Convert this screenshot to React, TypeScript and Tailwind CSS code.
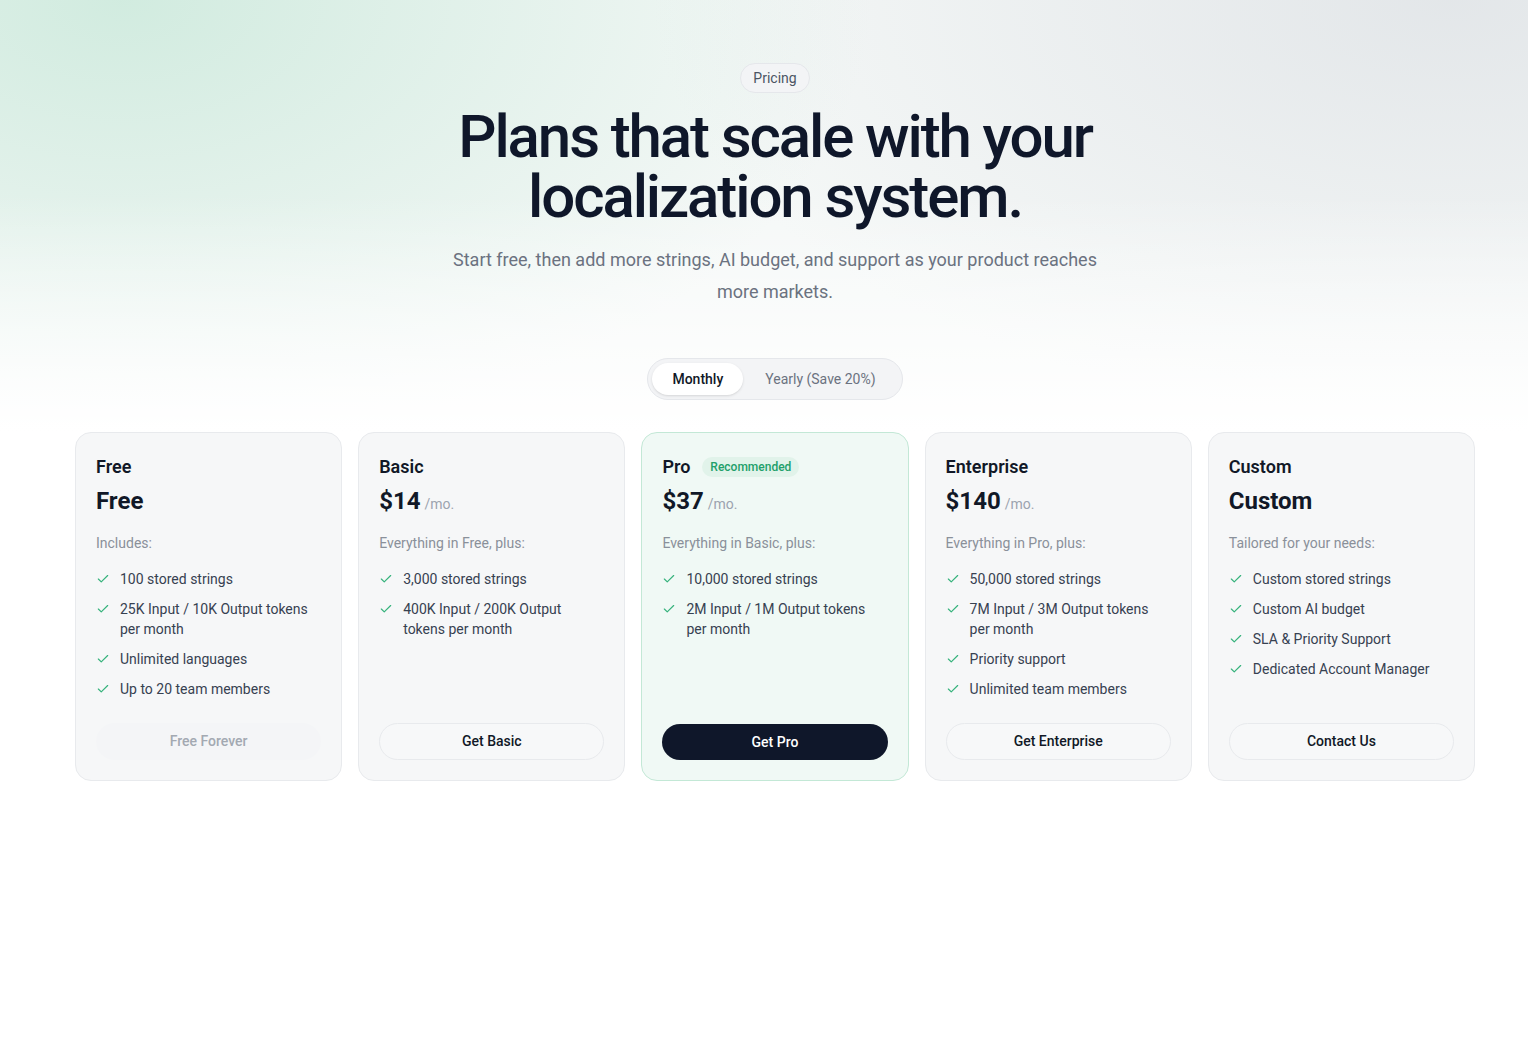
import { Check } from "lucide-react";

interface Plan {
  name: string;
  price: string;
  perMonth: boolean;
  intro: string;
  features: string[];
  cta: string;
  variant: "muted" | "outline" | "primary";
  recommended?: boolean;
}

const PLANS: Plan[] = [
  {
    name: "Free",
    price: "Free",
    perMonth: false,
    intro: "Includes:",
    features: [
      "100 stored strings",
      "25K Input / 10K Output tokens per month",
      "Unlimited languages",
      "Up to 20 team members",
    ],
    cta: "Free Forever",
    variant: "muted",
  },
  {
    name: "Basic",
    price: "$14",
    perMonth: true,
    intro: "Everything in Free, plus:",
    features: ["3,000 stored strings", "400K Input / 200K Output tokens per month"],
    cta: "Get Basic",
    variant: "outline",
  },
  {
    name: "Pro",
    price: "$37",
    perMonth: true,
    intro: "Everything in Basic, plus:",
    features: ["10,000 stored strings", "2M Input / 1M Output tokens per month"],
    cta: "Get Pro",
    variant: "primary",
    recommended: true,
  },
  {
    name: "Enterprise",
    price: "$140",
    perMonth: true,
    intro: "Everything in Pro, plus:",
    features: [
      "50,000 stored strings",
      "7M Input / 3M Output tokens per month",
      "Priority support",
      "Unlimited team members",
    ],
    cta: "Get Enterprise",
    variant: "outline",
  },
  {
    name: "Custom",
    price: "Custom",
    perMonth: false,
    intro: "Tailored for your needs:",
    features: [
      "Custom stored strings",
      "Custom AI budget",
      "SLA & Priority Support",
      "Dedicated Account Manager",
    ],
    cta: "Contact Us",
    variant: "outline",
  },
];

function PlanCard({ plan }: { plan: Plan }) {
  return (
    <div
      className={`flex flex-col rounded-2xl border px-5 pt-5 pb-5 ${
        plan.recommended ? "bg-[#f0f9f5] border-[#c3e8d6]" : "bg-[#f6f7f8] border-[#e8eaed]"
      }`}
    >
      {/* Header */}
      <div className="flex items-center gap-3">
        <h3 className="text-[18px] leading-7 font-semibold text-[#111827]">{plan.name}</h3>
        {plan.recommended && (
          <span className="rounded-full bg-[#e1f3ea] px-2 py-0.5 text-[12px] leading-4 font-medium text-[#22a06b]">
            Recommended
          </span>
        )}
      </div>
      <div className="mt-1 flex items-baseline gap-1">
        <span className="text-[24px] leading-8 font-bold text-[#111827]">{plan.price}</span>
        {plan.perMonth && <span className="text-[14px] text-[#9ca3af]">/mo.</span>}
      </div>

      <p className="mt-4 text-[14px] leading-5 text-[#8a909a]">{plan.intro}</p>

      {/* Features */}
      <ul className="mt-4 flex-1 space-y-2.5">
        {plan.features.map((f) => (
          <li key={f} className="flex items-start gap-2.5 text-[14px] leading-5 text-[#374151]">
            <Check size={14} strokeWidth={2} className="mt-[3px] shrink-0 text-[#34b27b]" />
            <span>{f}</span>
          </li>
        ))}
      </ul>

      <div className="pt-6">
        {plan.variant === "primary" && (
          <button className="mt-0.5 h-9 w-full rounded-full bg-[#0f172a] text-[14px] font-medium text-white">
            {plan.cta}
          </button>
        )}
        {plan.variant === "outline" && (
          <button className="h-[37px] w-full rounded-full border border-[#e8eaed] bg-[#f7f8f9] text-[14px] font-medium text-[#111827]">
            {plan.cta}
          </button>
        )}
        {plan.variant === "muted" && (
          <button className="h-[37px] w-full rounded-full bg-[#f4f5f7] text-[14px] font-medium text-[#a3a9b2]">
            {plan.cta}
          </button>
        )}
      </div>
    </div>
  );
}

export default function App() {
  return (
    <div className="min-h-screen bg-white font-['Roboto',sans-serif] antialiased">
      {/* Hero */}
      <section className="bg-[linear-gradient(to_bottom,rgba(255,255,255,0)_45%,#ffffff_100%),radial-gradient(ellipse_750px_450px_at_8%_0%,rgba(180,225,204,0.55),rgba(255,255,255,0)_100%),radial-gradient(ellipse_800px_420px_at_95%_0%,rgba(215,219,224,0.6),rgba(255,255,255,0)_100%),linear-gradient(#f5f8f7,#f5f8f7)] pl-[22px] pt-[63px] pb-8">
        <div className="mx-auto flex w-[1400px] flex-col items-center">
          <span className="rounded-full border border-[#e5e7eb] bg-[#f3f4f6] px-3 py-1 text-[14px] leading-5 text-[#4b5563]">
            Pricing
          </span>
          <h1 className="mt-[14px] text-center text-[60px] leading-[60px] font-medium tracking-[-0.035em] text-[#0f172a]">
            Plans that scale with your
            <br />
            localization system.
          </h1>
          <p className="mt-[17px] max-w-[680px] text-center text-[18px] leading-8 text-[#6b7280]">
            Start free, then add more strings, AI budget, and support as your product reaches more markets.
          </p>

          {/* Billing toggle */}
          <div className="mt-[50px] flex items-center rounded-full border border-[#e5e7eb] bg-[#f3f4f6] p-1">
            <button className="h-8 rounded-full bg-white px-5 text-[14px] font-medium text-[#111827] shadow-sm">
              Monthly
            </button>
            <button className="h-8 px-[22px] text-[14px] text-[#6b7280]">Yearly (Save 20%)</button>
          </div>
        </div>
      </section>

      {/* Plans */}
      <section className="pl-[22px] pb-16">
        <div className="mx-auto grid w-[1400px] grid-cols-5 gap-4">
          {PLANS.map((p) => (
            <PlanCard key={p.name} plan={p} />
          ))}
        </div>
      </section>
    </div>
  );
}
